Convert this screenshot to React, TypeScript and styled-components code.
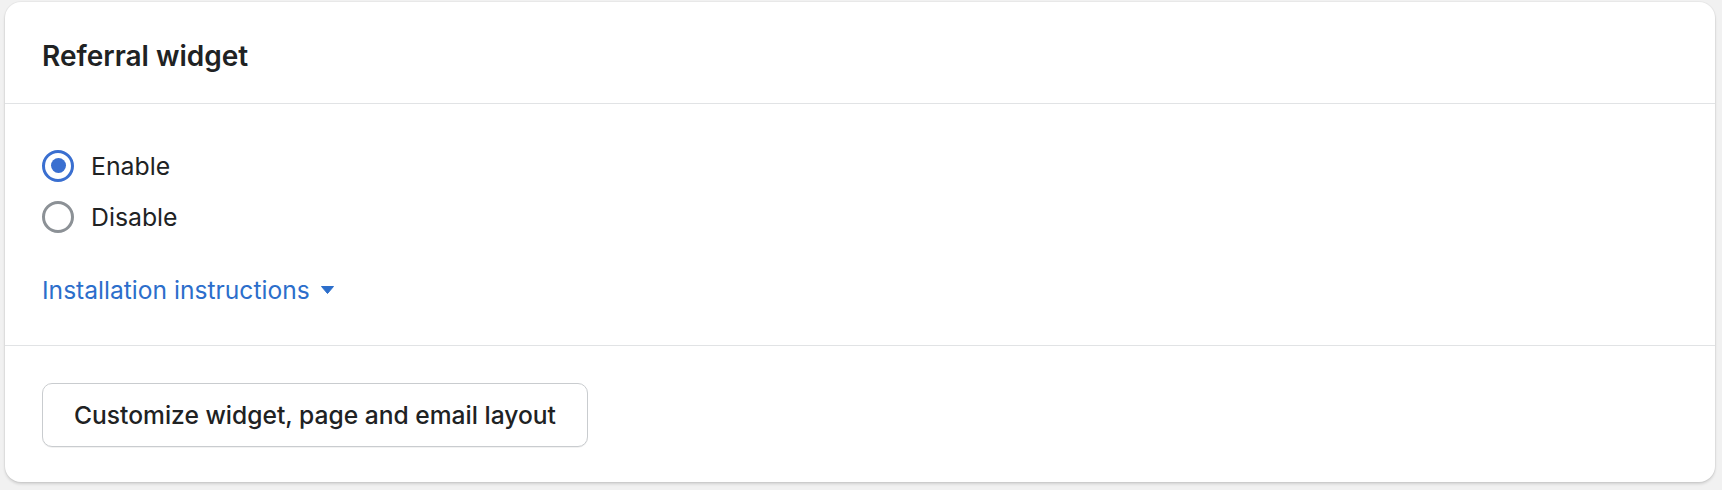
import React from "react";
import styled, { createGlobalStyle } from "styled-components";

const Global = createGlobalStyle`
  html, body { margin: 0; padding: 0; background: #f1f1f1; }
  body { font-family: Inter, "Noto Sans", sans-serif; color: #202223; -webkit-font-smoothing: antialiased; }
`;

const Page = styled.div`
  padding: 2px 7px 8px 5px;
`;

const Card = styled.section`
  background: #ffffff;
  border-radius: 16px;
  box-shadow: 0 0 0 1px rgba(0, 0, 0, 0.03), 0 2px 3px rgba(0, 0, 0, 0.14);
  overflow: hidden;
`;

const Header = styled.header`
  height: 102px;
  box-sizing: border-box;
  display: flex;
  align-items: center;
  padding: 7px 37px 0;
  border-bottom: 1px solid #e1e3e5;
`;

const Title = styled.h2`
  margin: 0;
  font-size: 28px;
  font-weight: 600;
  color: #202223;
`;

const Body = styled.div`
  padding: 36px 37px 38px;
  border-bottom: 1px solid #e1e3e5;
  display: flex;
  flex-direction: column;
`;

const RadioRow = styled.label`
  height: 51px;
  display: flex;
  align-items: center;
  gap: 17px;
  font-size: 24.8px;
  color: #202223;
  cursor: pointer;
`;

const RadioCircle = styled.span<{ $checked?: boolean }>`
  width: 32px;
  height: 32px;
  box-sizing: border-box;
  border-radius: 50%;
  border: 3px solid ${(p) => (p.$checked ? "#3a6fd0" : "#8c9196")};
  display: flex;
  align-items: center;
  justify-content: center;
  flex-shrink: 0;
  &::after {
    content: "";
    width: 15px;
    height: 15px;
    border-radius: 50%;
    background: #3a6fd0;
    display: ${(p) => (p.$checked ? "block" : "none")};
  }
`;

const LinkRow = styled.div`
  margin-top: 31px;
  height: 34px;
  display: flex;
  align-items: center;
  gap: 11px;
  font-size: 24.6px;
  color: #2c6ecb;
  cursor: pointer;
`;

const Footer = styled.div`
  padding: 37px 37px 35px;
`;

const Button = styled.button`
  height: 64px;
  padding: 0 31px;
  background: #fff;
  border: 1px solid #c9cccf;
  border-radius: 10px;
  font-family: inherit;
  font-size: 24.6px;
  font-weight: 500;
  color: #202223;
  box-shadow: 0 1px 0 rgba(0, 0, 0, 0.05);
  cursor: pointer;
`;

const Caret = () => (
  <svg width="13" height="8" viewBox="0 0 13 8" aria-hidden>
    <path d="M0.5 0.5 H12.5 L6.5 7.5 Z" fill="#2c6ecb" strokeLinejoin="round" stroke="#2c6ecb" strokeWidth="1" />
  </svg>
);

export default function App() {
  return (
    <>
      <Global />
      <Page>
        <Card>
          <Header>
            <Title>Referral widget</Title>
          </Header>
          <Body>
            <RadioRow>
              <RadioCircle $checked />
              Enable
            </RadioRow>
            <RadioRow>
              <RadioCircle />
              Disable
            </RadioRow>
            <LinkRow>
              Installation instructions
              <Caret />
            </LinkRow>
          </Body>
          <Footer>
            <Button>Customize widget, page and email layout</Button>
          </Footer>
        </Card>
      </Page>
    </>
  );
}
